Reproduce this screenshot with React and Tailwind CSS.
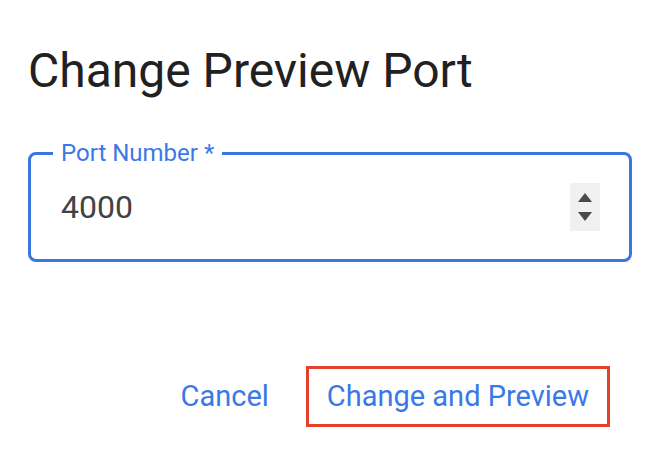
import { useState } from "react"

const Spinner = () => (
  <div className="flex flex-col items-center justify-center gap-[10px] w-[30px] h-[48px] bg-[#f0f0f0]">
    <svg width="14" height="9" viewBox="0 0 14 9">
      <path d="M7 0L14 9H0Z" fill="#4a4a4a" />
    </svg>
    <svg width="14" height="9" viewBox="0 0 14 9">
      <path d="M0 0H14L7 9Z" fill="#4a4a4a" />
    </svg>
  </div>
)

const App = () => {
  const [port] = useState("4000")

  return (
    <div className="w-[667px] h-[452px] bg-white pl-[28px] pr-[35px] pt-[43px]" style={{ fontFamily: "Roboto, 'Liberation Sans', sans-serif" }}>
      <h2 className="text-[48px] leading-[56px] text-[#212121] font-normal">Change Preview Port</h2>

      {/* field */}
      <div className="relative mt-[53px] h-[110px] border-[3px] border-[#3b76de] rounded-[8px] flex items-center justify-between pl-[30px] pr-[29px]">
        <label className="absolute -top-[16px] left-[22px] px-[8px] bg-white text-[24px] leading-[28px] text-[#3b78e7]">
          Port Number *
        </label>
        <span className="text-[32px] text-[#424242]">{port}</span>
        <Spinner />
      </div>

      {/* actions */}
      <div className="flex justify-end items-center mt-[104px] pr-[22px] gap-[21px]">
        <button className="px-[16px] h-[61px] text-[29px] text-[#3b78e7]">Cancel</button>
        <button className="px-[18px] h-[61px] border-[3px] border-[#e5402a] text-[29px] text-[#3b78e7]">
          Change and Preview
        </button>
      </div>
    </div>
  )
}

export default App
